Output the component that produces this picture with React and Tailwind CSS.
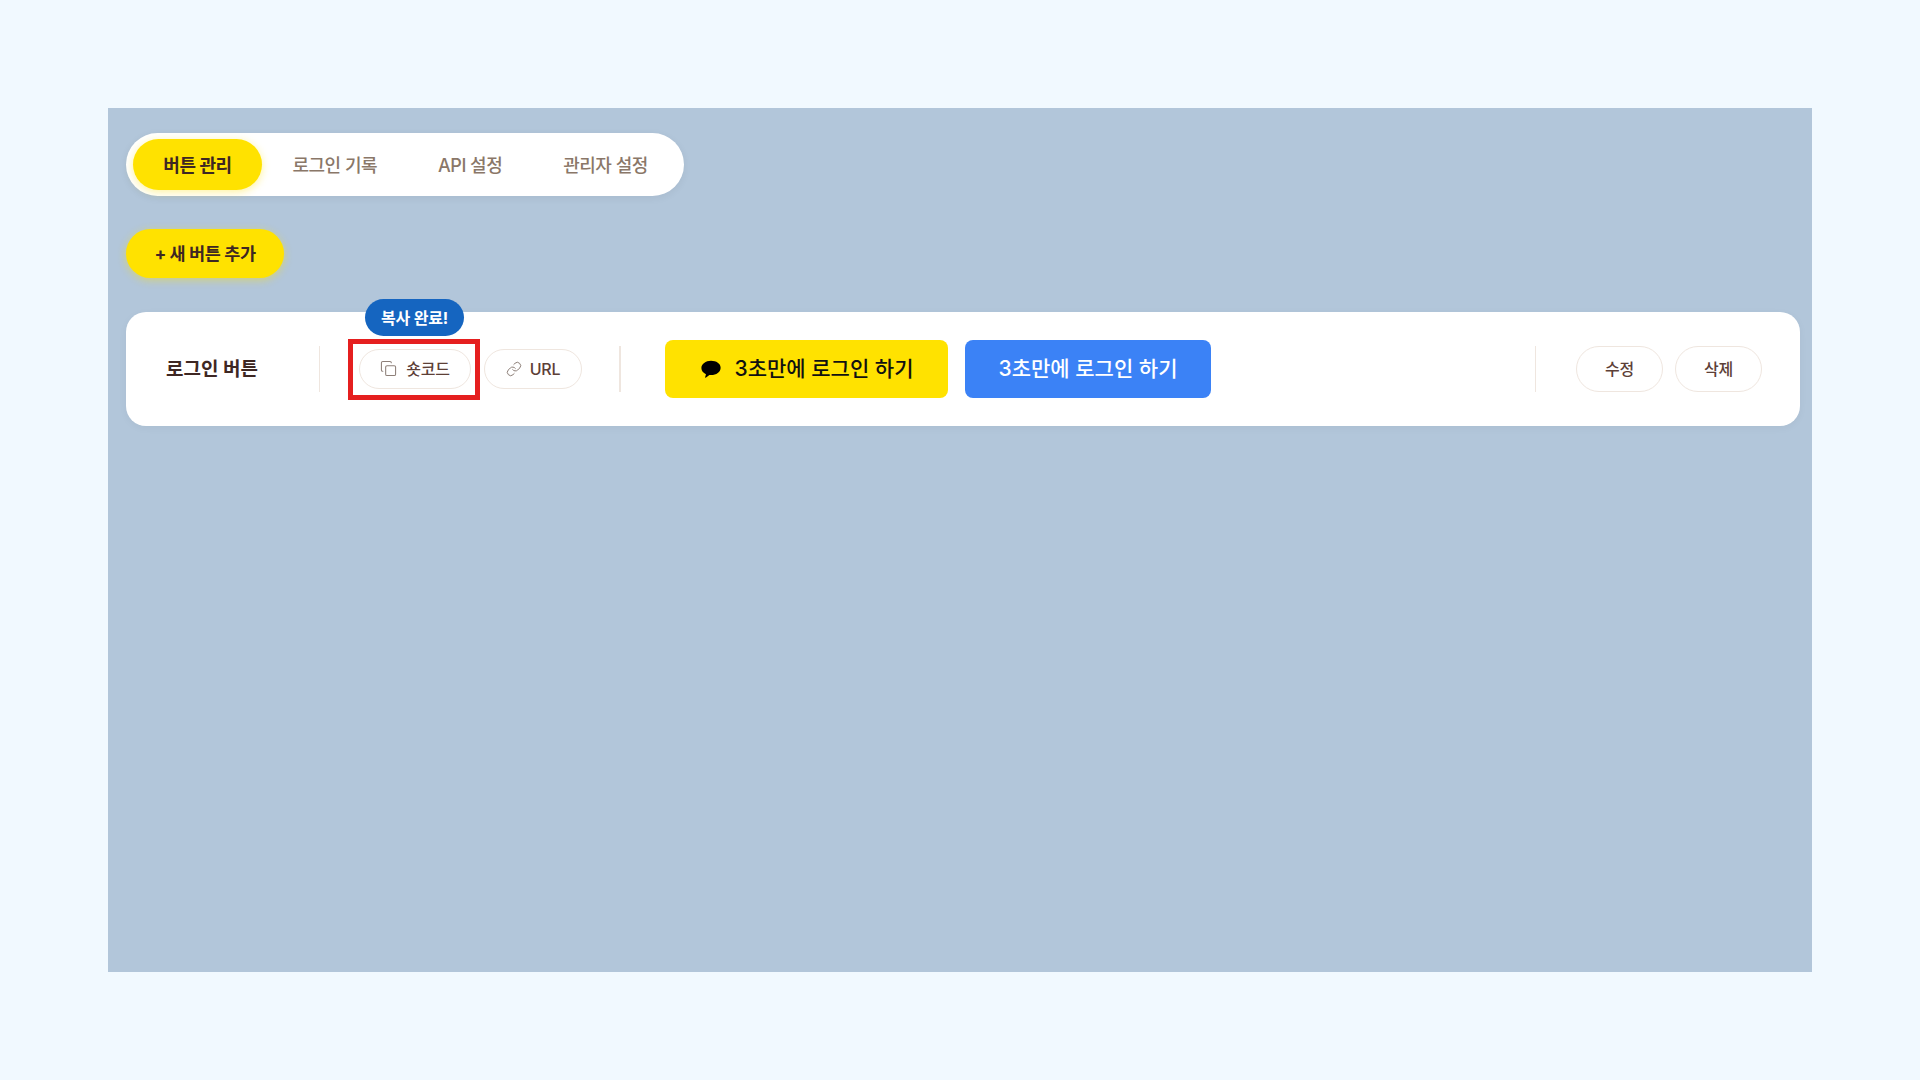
import { Copy, Link } from "lucide-react";

const font = "font-['Inter','Noto_Sans_CJK_KR',sans-serif]";

const Tab = ({ label, active }) => (
  <button
    className={
      active
        ? "h-[51px] w-[129px] rounded-full bg-[#ffe200] pt-px text-[18px] font-semibold tracking-[-0.5px] text-[#3e2723] shadow-[0_2px_8px_rgba(255,224,0,0.4)]"
        : "h-[51px] rounded-full px-[30.5px] pt-px text-[18px] font-medium tracking-[-0.5px] text-[#8a7768]"
    }
  >
    {label}
  </button>
);

const OutlineButton = ({ children, className }) => (
  <button
    className={`flex items-center justify-center rounded-full border border-[#efe6df] bg-white pb-px font-medium tracking-[-0.2px] text-[#5d4037] ${className}`}
  >
    {children}
  </button>
);

export default function App() {
  return (
    <div className={`${font} min-h-screen bg-[#f1f9ff] p-[108px]`}>
      <div className="h-[864px] bg-[#b2c6da] pl-[18px] pr-[12px] pt-[25px]">
        {/* Tabs */}
        <div className="flex h-[63px] w-[558px] items-center rounded-full bg-white pl-[7px] shadow-[0_2px_8px_rgba(0,0,0,0.06)]">
          <Tab label="버튼 관리" active />
          <Tab label="로그인 기록" />
          <Tab label="API 설정" />
          <Tab label="관리자 설정" />
        </div>

        <button className="mt-[33px] block h-[49px] w-[158px] rounded-full bg-[#ffe200] pt-px text-[17.5px] font-bold tracking-[-0.4px] text-[#3e2723] shadow-[0_2px_8px_rgba(255,224,0,0.45)]">
          + 새 버튼 추가
        </button>

        {/* Row */}
        <div className="relative mt-[34px] flex h-[114px] items-center rounded-[20px] bg-white pl-[40px] pr-[38px] shadow-[0_2px_8px_rgba(0,0,0,0.04)]">
          <div className="w-[153px] pt-[2px] text-[19px] font-bold text-[#3e2723]">로그인 버튼</div>
          <div className="h-[46px] w-px bg-[#efe6df]" />

          <div className="relative ml-[39px]">
            <div className="absolute left-[6px] top-[-50px] flex h-[37px] w-[99px] items-center justify-center rounded-full bg-[#1565c0] text-[16px] font-bold tracking-[-0.2px] text-white">
              복사 완료!
            </div>
            <div className="pointer-events-none absolute left-[-11px] top-[-10px] h-[61px] w-[132px] border-[5px] border-[#e51f1f]" />
            <OutlineButton className="h-[40px] w-[112px] gap-[9px] text-[16px]">
              <Copy size={17} strokeWidth={1.5} className="text-[#8d7f78]" />
              숏코드
            </OutlineButton>
          </div>

          <OutlineButton className="ml-[13px] h-[40px] w-[98px] gap-[8px] text-[16px]">
            <Link size={16} strokeWidth={1.5} className="text-[#8d7f78]" />
            URL
          </OutlineButton>

          <div className="ml-[37px] h-[46px] w-[2px] bg-[#efe6df]" />

          <button className="ml-[44px] flex h-[58px] w-[283px] items-center justify-center gap-[13px] rounded-[8px] bg-[#ffe200] text-[21px] font-medium text-[#111]">
            <svg width="22" height="22" viewBox="0 0 24 24" className="shrink-0">
              <path
                fill="#000"
                d="M12 3C6.2 3 1.500 6.600 1.500 11c0 2.900 2 5.400 5 6.800-.2.800-.8 2.900-.9 3.300-.1.500.2.500.4.400.2-.1 3-2.100 4.300-3 .5.100 1.100.100 1.700.100 5.800 0 10.500-3.600 10.500-8.100S17.800 3 12 3z"
              />
            </svg>
            3초만에 로그인 하기
          </button>
          <button className="ml-[17px] h-[58px] w-[246px] rounded-[8px] bg-[#3b82f6] text-[21px] font-medium text-white">
            3초만에 로그인 하기
          </button>

          <div className="ml-auto h-[46px] w-px bg-[#efe6df]" />
          <OutlineButton className="ml-[40px] h-[46px] w-[87px] text-[16px]">수정</OutlineButton>
          <OutlineButton className="ml-[12px] h-[46px] w-[87px] text-[16px]">삭제</OutlineButton>
        </div>
      </div>
    </div>
  );
}
